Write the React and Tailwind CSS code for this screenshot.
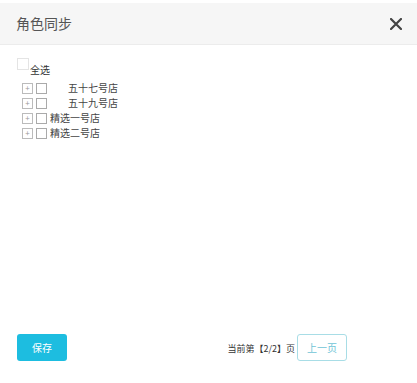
export default function App() {
  const shops = [
    { name: "五十七号店", pad: true },
    { name: "五十九号店", pad: true },
    { name: "精选一号店", pad: false },
    { name: "精选二号店", pad: false },
  ];

  return (
    <div
      className="w-[417px] h-[383px] bg-white flex flex-col pt-[3px] text-[#333]"
      style={{ fontFamily: '"Noto Sans CJK SC", "Liberation Sans", sans-serif' }}
    >
      {/* header */}
      <div className="h-[42px] shrink-0 bg-[#f6f6f6] border-b border-[#ececec] flex items-center justify-between pl-[16px] pr-[15px]">
        <span className="text-[14px] text-[#555]">角色同步</span>
        <svg width="12" height="12" viewBox="0 0 12 12" className="mt-[1px]">
          <path d="M1 1L11 11M11 1L1 11" stroke="#444" strokeWidth="2.2" strokeLinecap="round" />
        </svg>
      </div>

      {/* tree */}
      <div className="flex-1 pl-[17px] pt-[13px]">
        <div className="flex items-start">
          <span className="w-[12px] h-[12px] border border-[#e4e4e4] bg-white" />
          <span className="text-[10px] leading-[12px] mt-[6px] ml-[1px]">全选</span>
        </div>
        <div className="mt-[6px] pl-[5px] flex flex-col gap-[3px] text-[#444]">
          {shops.map((s) => (
            <div key={s.name} className="flex items-center h-[12px]">
              <span className="w-[11px] h-[11px] border border-[#bbb] flex items-center justify-center">
                <span className="text-[8px] leading-none text-[#999]">+</span>
              </span>
              <span className="w-[11px] h-[11px] border border-[#aaa] ml-[3px]" />
              <span className={`text-[10px] leading-[12px] ${s.pad ? "ml-[21px]" : "ml-[3px]"}`}>
                {s.name}
              </span>
            </div>
          ))}
        </div>
      </div>

      {/* footer */}
      <div className="h-[40px] shrink-0 flex items-start pl-[17px] pr-[70px] mb-[9px]">
        <button className="w-[50px] h-[27px] rounded-[3px] bg-[#1dbde0] text-white text-[10px]">
          保存
        </button>
        <div className="flex-1" />
        <span className="text-[9px] mt-[8px] text-[#333]">当前第【2/2】页</span>
        <button className="ml-[2px] w-[50px] h-[27px] rounded-[3px] border border-[#a8dde6] bg-white text-[#6fc4d6] text-[10px]">
          上一页
        </button>
      </div>
    </div>
  );
}
